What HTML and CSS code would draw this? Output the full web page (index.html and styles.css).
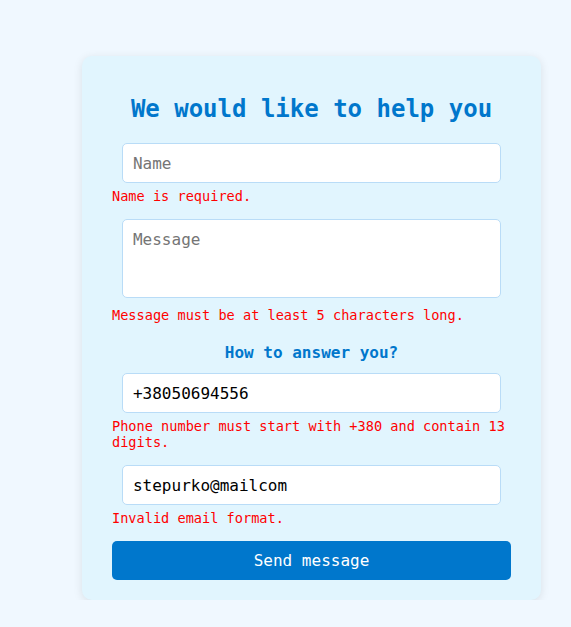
FILE: index.html
```html
<!DOCTYPE html>
<html lang="en">
<head>
<meta charset="utf-8">
<title>Help form</title>
<link rel="stylesheet" href="styles.css">
</head>
<body>
<form class="card">
  <h2 class="title">We would like to help you</h2>
  <input class="field" type="text" placeholder="Name">
  <p class="error">Name is required.</p>
  <textarea class="field area" placeholder="Message"></textarea>
  <p class="error">Message must be at least 5 characters long.</p>
  <h3 class="subtitle">How to answer you?</h3>
  <input class="field" type="text" value="+38050694556">
  <p class="error">Phone number must start with +380 and contain 13 digits.</p>
  <input class="field" type="text" value="stepurko@mailcom">
  <p class="error">Invalid email format.</p>
  <button class="submit" type="button">Send message</button>
</form>
</body>
</html>
```
FILE: styles.css
```css
html, body {
  margin: 0;
  padding: 0;
  background: #f0f8ff;
  font-family: "DejaVu Sans Mono", monospace;
}
body {
  padding: 56px 0 0 82px;
}
.card {
  width: 399px;
  padding: 30px 30px 20px;
  background: #e1f5fe;
  border-radius: 10px;
  box-shadow: 0 2px 10px rgba(0, 0, 0, 0.1);
  display: flex;
  flex-direction: column;
}
.title {
  margin: 9px 0 20px;
  font-size: 24px;
  line-height: 28px;
  font-weight: bold;
  color: #0077cc;
  text-align: center;
}
.field {
  display: block;
  box-sizing: border-box;
  width: 95%;
  height: 40px;
  margin: 0 auto;
  padding: 0 10px;
  border: 1px solid #b9dcf7;
  border-radius: 5px;
  background: #fff;
  font-family: "DejaVu Sans Mono", monospace;
  font-size: 16px;
  color: #000;
  outline: none;
}
.field::placeholder {
  color: #757575;
}
.area {
  height: 79px;
  padding: 10px;
  resize: none;
  line-height: 19px;
}
.error {
  margin: 5px 0 15px;
  font-size: 13.6px;
  color: #ff0000;
}
.area + .error {
  margin-top: 9px;
}
.subtitle {
  margin: 5px 0 11px;
  font-size: 16px;
  line-height: 19px;
  font-weight: bold;
  color: #0077cc;
  text-align: center;
}
.submit {
  height: 39px;
  border: none;
  border-radius: 5px;
  background: #0077cc;
  color: #fff;
  font-family: "DejaVu Sans Mono", monospace;
  font-size: 16px;
  cursor: pointer;
}
```
